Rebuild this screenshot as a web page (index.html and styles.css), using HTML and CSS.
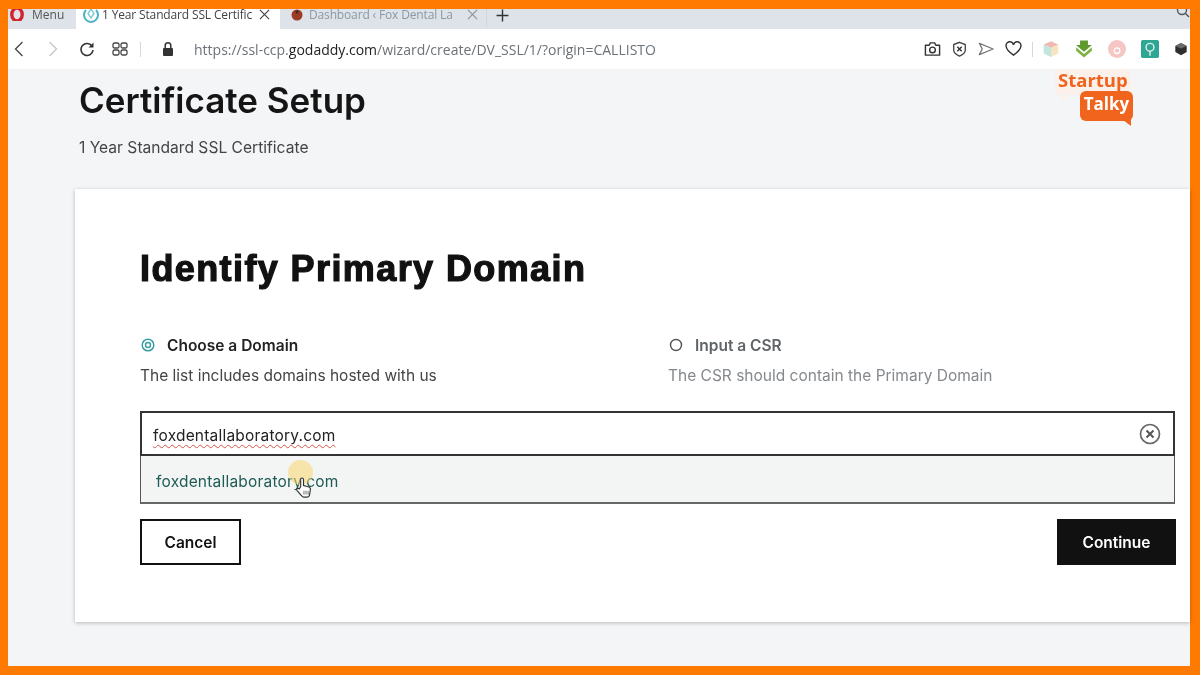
FILE: index.html
```html
<!DOCTYPE html>
<html lang="en">
<head>
<meta charset="utf-8">
<title>Certificate Setup</title>
<link rel="stylesheet" href="styles.css">
</head>
<body>
<div class="frame">
  <div class="tabbar">
    <div class="menu">
      <svg class="opera" viewBox="0 2 16 12"><ellipse cx="8" cy="7.500" rx="5.200" ry="6.400" fill="none" stroke="#d5232c" stroke-width="3.400"/></svg>
      <span>Menu</span>
    </div>
    <div class="tab active">
      <svg class="fav" viewBox="0 2 16 14"><path d="M3 3a7 7 0 1 0 10 0" fill="none" stroke="#4bb3c4" stroke-width="2"/><path d="M8 2 5 6.500 8 11l3-4.500z" fill="none" stroke="#7cc9d5" stroke-width="1.400"/></svg>
      <span class="tabtext">1 Year Standard SSL Certific</span>
      <svg class="close" viewBox="0 0 12 12"><path d="M1 1l10 10M11 1 1 11" stroke="#444" stroke-width="1.300"/></svg>
    </div>
    <div class="tab idle">
      <svg class="fav small" viewBox="0 0 12 12"><circle cx="6" cy="6" r="5.500" fill="#9c3b24"/><circle cx="6" cy="3" r="1.500" fill="#3a2a25"/></svg>
      <span class="tabtext">Dashboard ‹ Fox Dental La</span>
      <svg class="close" viewBox="0 0 12 12"><path d="M1 1l10 10M11 1 1 11" stroke="#8d949b" stroke-width="1.300"/></svg>
    </div>
    <svg class="plus" viewBox="0 0 12 12"><path d="M6 .5v11M.5 6h11" stroke="#333" stroke-width="1.300"/></svg>
    <svg class="search" viewBox="0 5 14 9"><circle cx="6" cy="6" r="4.500" fill="none" stroke="#555" stroke-width="1.400"/><path d="M9.500 9.500 13 13" stroke="#555" stroke-width="1.400"/></svg>
  </div>
  <div class="toolbar">
    <div class="nav">
      <svg class="ico chev" viewBox="0 0 10 16"><path d="M8.500 1 1.500 8l7 7" fill="none" stroke="#444" stroke-width="1.300"/></svg>
      <svg class="ico chev" viewBox="0 0 10 16"><path d="M1.500 1l7 7-7 7" fill="none" stroke="#c3c6c9" stroke-width="1.300"/></svg>
      <svg class="ico reload" viewBox="0 0 16 16"><path d="M13.200 5.500A6 6 0 1 0 14 9" fill="none" stroke="#333" stroke-width="1.600"/><path d="M14.500 1.500v5h-5z" fill="#333"/></svg>
      <svg class="ico grid" viewBox="0 0 16 14"><g fill="none" stroke="#444" stroke-width="1.300"><rect x="1" y="1" width="6" height="5" rx="1.500"/><rect x="9" y="1" width="6" height="5" rx="1.500"/><rect x="1" y="8" width="6" height="5" rx="1.500"/><rect x="9" y="8" width="6" height="5" rx="1.500"/></g></svg>
      <span class="sep"></span>
      <svg class="ico lock" viewBox="0 0 12 16"><path d="M3.200 7V4.500a2.800 2.800 0 0 1 5.600 0V7" fill="none" stroke="#333" stroke-width="1.500"/><rect x="1" y="7" width="10" height="8" rx="1" fill="#333"/></svg>
      <div class="url">https://ssl-ccp.<b>godaddy.com</b>/wizard/create/DV_SSL/1/?origin=CALLISTO</div>
    </div>
    <div class="tools">
      <svg class="tool" viewBox="0 0 18 16"><path d="M1.500 4h4l1.200-2.500h4.600L12.500 4h4v10.500h-15z" fill="none" stroke="#333" stroke-width="1.500" stroke-linejoin="round"/><circle cx="9" cy="9" r="3" fill="none" stroke="#333" stroke-width="1.500"/></svg>
      <svg class="tool" viewBox="0 0 16 18"><path d="M8 1.500 14.500 4v6.500c0 3-3 5-6.500 6.500-3.500-1.500-6.500-3.500-6.500-6.500V4z" fill="none" stroke="#444" stroke-width="1.500"/><path d="M5.500 6.500l5 5M10.500 6.500l-5 5" stroke="#333" stroke-width="1.600"/></svg>
      <svg class="tool" viewBox="0 0 18 16"><path d="M1.500 2 16 8 1.500 14 4.500 8z" fill="none" stroke="#777" stroke-width="1.400" stroke-linejoin="round"/></svg>
      <svg class="tool" viewBox="0 0 18 16"><path d="M9 14.500C3 10 1.200 7.500 1.200 5A3.800 3.800 0 0 1 9 3.500 3.800 3.800 0 0 1 16.800 5C16.800 7.500 15 10 9 14.500z" fill="none" stroke="#333" stroke-width="1.500"/></svg>
      <span class="sep thin"></span>
      <svg class="ext" viewBox="0 0 16 16"><path d="M8 1l6.500 3L8 7 1.500 4z" fill="#f0b9b4"/><path d="M1.500 4 8 7v8l-6.500-3z" fill="#bfe6df"/><path d="M14.500 4 8 7v8l6.500-3z" fill="#f7e4c2"/></svg>
      <svg class="ext" viewBox="0 0 16 16"><path d="M4.500.5h7v4H15L8 10.500 1 4.500h3.500z" fill="#5f9a2d"/><path d="M1 6.500l7 6 7-6v3l-7 6-7-6z" fill="#7cb342"/></svg>
      <svg class="ext" viewBox="0 0 16 16"><circle cx="8" cy="8" r="8" fill="#f5c6c4"/><circle cx="8" cy="9.500" r="2.500" fill="none" stroke="#fff" stroke-width="1.200"/></svg>
      <svg class="ext" viewBox="0 0 16 16"><rect width="16" height="16" rx="1.500" fill="#2fa693"/><circle cx="8" cy="6.500" r="3.500" fill="none" stroke="#d8f1ec" stroke-width="1.300"/><path d="M8 10v4" stroke="#d8f1ec" stroke-width="1.300"/></svg>
      <svg class="ext last" viewBox="0 0 16 16"><path d="M8 1l6.500 3.500v7L8 15l-6.500-3.500v-7z" fill="#2e2e30"/><path d="M1.500 4.500 8 1l6.500 3.500L8 7.500z" fill="#6b6b6e"/></svg>
    </div>
  </div>
  <main class="page">
    <div class="logo">
      <span class="startup">Startup</span>
      <span class="talky">Talky</span>
    </div>
    <h1 class="title">Certificate Setup</h1>
    <p class="subtitle">1 Year Standard SSL Certificate</p>
    <section class="card">
      <h2 class="heading">Identify Primary Domain</h2>
      <div class="options">
        <div class="option">
          <div class="radio-line">
            <svg class="radio" viewBox="0 0 14 14"><circle cx="7" cy="7" r="5.800" fill="none" stroke="#3c9ea5" stroke-width="1.500"/><circle cx="7" cy="7" r="2.500" fill="none" stroke="#3c9ea5" stroke-width="1.500"/></svg>
            <span class="label">Choose a Domain</span>
          </div>
          <div class="hint">The list includes domains hosted with us</div>
        </div>
        <div class="option muted">
          <div class="radio-line">
            <svg class="radio" viewBox="0 0 14 14"><circle cx="7" cy="7" r="5.500" fill="none" stroke="#555" stroke-width="1.400"/></svg>
            <span class="label">Input a CSR</span>
          </div>
          <div class="hint">The CSR should contain the Primary Domain</div>
        </div>
      </div>
      <div class="combo">
        <div class="input">
          <span class="value">foxdentallaboratory.com</span>
          <svg class="clear" viewBox="0 0 22 22"><circle cx="11" cy="11" r="9.500" fill="none" stroke="#666" stroke-width="1.700"/><path d="M7.500 7.500l7 7M14.500 7.500l-7 7" stroke="#555" stroke-width="2"/></svg>
        </div>
        <div class="suggestion">
          <span class="suggest-text">foxdentallaboratory.com
            <span class="halo"></span>
            <svg class="cursor" viewBox="0 0 18 24"><path d="M6 11V3.500a1.500 1.500 0 0 1 3 0V10l5 1.200c1.500.4 2.500 1.500 2.300 3l-.8 5c-.2 1.500-1 3-2.500 3H9.500c-1.200 0-2-.6-2.700-1.700L2 15c-.8-1.500 1-3 2.500-1.500z" fill="#fff" stroke="#333" stroke-width="1.200"/><path d="M9.500 15.500v4M11.700 15.500v4M13.900 15.500v4" stroke="#444" stroke-width=".8"/></svg>
          </span>
        </div>
      </div>
      <div class="actions">
        <button class="btn cancel">Cancel</button>
        <button class="btn continue">Continue</button>
      </div>
    </section>
  </main>
</div>
</body>
</html>
```
FILE: styles.css
```css
* { box-sizing: border-box; }
html, body { margin: 0; height: 100%; }
body { font-family: "Inter", "Liberation Sans", sans-serif; color: #111; overflow: hidden; }
.frame {
  width: 1200px; height: 675px;
  border-style: solid; border-color: #ff7a00;
  border-width: 9px 10px 9px 8px;
  display: flex; flex-direction: column;
  background: #f4f5f7;
  filter: blur(.4px);
}
.tabbar {
  height: 20px; flex: none; background: #dde3e8;
  display: flex; align-items: flex-start; position: relative;
  font-family: "Open Sans", sans-serif; font-size: 12px; line-height: 12px;
}
.menu { width: 68px; padding-left: 1px; display: flex; align-items: flex-start; gap: 7px; color: #555; }
.opera { width: 16px; height: 12px; flex: none; }
.tab { height: 20px; display: flex; align-items: flex-start; }
.tab.active { width: 204px; background: #fff; color: #444; padding-left: 7px; }
.tab.idle { width: 207px; padding-left: 11px; color: #8c98a3; border-right: 1px solid #cfd5da; height: 18px; }
.fav { width: 16px; height: 14px; flex: none; margin-right: 3px; }
.fav.small { width: 12px; height: 12px; margin-right: 6px; }
.tabtext { white-space: nowrap; width: 152px; letter-spacing: -.15px; }
.tab.idle .tabtext { width: 153px; }
.close { width: 11px; height: 11px; flex: none; margin-left: 5px; }
.plus { width: 13px; height: 13px; margin: 0 0 0 9px; }
.search { position: absolute; right: 0; top: 0; width: 14px; height: 9px; }
.toolbar {
  height: 40px; flex: none; background: #fff;
  display: flex; align-items: center; justify-content: space-between;
}
.nav { display: flex; align-items: center; }
.ico { flex: none; }
.chev { width: 10px; height: 16px; }
.chev:first-child { margin-left: 6px; }
.chev + .chev { margin-left: 24px; }
.reload { width: 16px; height: 16px; margin-left: 21px; }
.grid { width: 16px; height: 14px; margin-left: 17px; }
.sep { width: 1px; height: 15px; background: #d5d7da; margin-left: 12px; flex: none; }
.lock { width: 12px; height: 16px; margin-left: 21px; }
.url { margin-left: 20px; font-family: "Open Sans", sans-serif; font-size: 14px; color: #6b7278; white-space: nowrap; }
.url b { font-weight: 400; color: #222; }
.tools { display: flex; align-items: center; }
.tool { width: 17px; height: 16px; margin-right: 10px; flex: none; }
.sep.thin { margin: 0 9px 0 0; height: 15px; }
.ext { width: 18px; height: 18px; flex: none; margin-right: 15px; }
.ext.last { margin-right: 2px; width: 14px; height: 14px; }
.page { flex: 1; position: relative; padding: 8px 0 0 71px; }
.logo {
  position: absolute; left: 1046px; top: 0; width: 84px; height: 56px;
  font-family: "Open Sans", sans-serif; font-weight: 700;
}
.startup {
  position: absolute; left: 1px; top: 0; padding: 0 3px 5px;
  font-size: 18.500px; line-height: 21px; color: #f0641e;
  background: #fbf1ea; border-radius: 3px;
}
.startup::after {
  content: ""; position: absolute; left: 7px; bottom: -6px;
  border-style: solid; border-width: 6px 6px 0 0; border-color: #fbf1ea transparent transparent transparent;
}
.talky {
  position: absolute; left: 26px; top: 22px; width: 53px; height: 30px;
  background: #f0641e; color: #fff; border-radius: 6px;
  font-size: 17px; line-height: 26px; text-align: center;
}
.talky::after {
  content: ""; position: absolute; right: 2px; bottom: -5px;
  border-style: solid; border-width: 6px 0 0 8px; border-color: #f0641e transparent transparent transparent;
}
.title { margin: 0; font-size: 35px; line-height: 46px; font-weight: 600; color: #151515; }
.subtitle { margin: 13px 0 0 0; font-size: 15.600px; line-height: 24px; color: #444; }
.card {
  margin: 29px 0 0 -4px;
  height: 433px; background: #fff;
  box-shadow: 0 1px 4px rgba(0,0,0,.25);
  padding: 57px 15px 0 65px;
}
.heading {
  margin: 0; font-family: "Liberation Sans", sans-serif;
  font-size: 36px; line-height: 46px; font-weight: 700; color: #111;
  -webkit-text-stroke: 1.200px #111; letter-spacing: 1.400px;
}
.options { display: flex; margin-top: 41px; }
.option { width: 528px; flex: none; }
.option.muted { width: 507px; }
.radio-line { display: flex; align-items: center; height: 24px; padding-left: 1px; }
.radio { width: 14px; height: 14px; margin-right: 12px; flex: none; }
.label { font-size: 15.500px; font-weight: 600; color: #222; }
.hint { margin-top: 7px; font-size: 15.500px; line-height: 24px; color: #444; }
.option.muted .label { color: #5f6468; }
.option.muted .hint { color: #85898d; }
.combo { margin-top: 23px; }
.input {
  height: 45px; border: 2px solid #333;
  display: flex; align-items: center; justify-content: space-between;
  padding: 4px 12px 0 11px; background: #fff;
}
.value {
  font-size: 15.500px; color: #222; letter-spacing: .2px;
  text-decoration: underline wavy #d9534f 1px; text-underline-offset: 3px;
}
.clear { width: 22px; height: 22px; flex: none; margin-top: -4px; }
.suggestion {
  height: 48px; background: #f3f4f4;
  border: 1px solid #555; border-top: 0; border-bottom: 2px solid #666;
  display: flex; align-items: center; padding: 5px 0 0 15px;
}
.suggest-text { position: relative; font-size: 15.500px; color: #1f5c56; letter-spacing: .2px; }
.halo {
  position: absolute; left: 132px; top: -12px; width: 25px; height: 25px;
  border-radius: 50%; background: rgba(250,215,110,.55);
}
.cursor { position: absolute; left: 139px; top: 4px; width: 17px; height: 23px; }
.actions { display: flex; justify-content: space-between; margin-top: 15px; }
.btn {
  height: 46px; font-family: inherit; font-size: 15.500px; font-weight: 600;
  border: 2px solid #111; border-radius: 0;
}
.cancel { width: 101px; background: #fff; color: #111; }
.continue { width: 119px; background: #111; color: #fff; margin-right: -1px; }
```
